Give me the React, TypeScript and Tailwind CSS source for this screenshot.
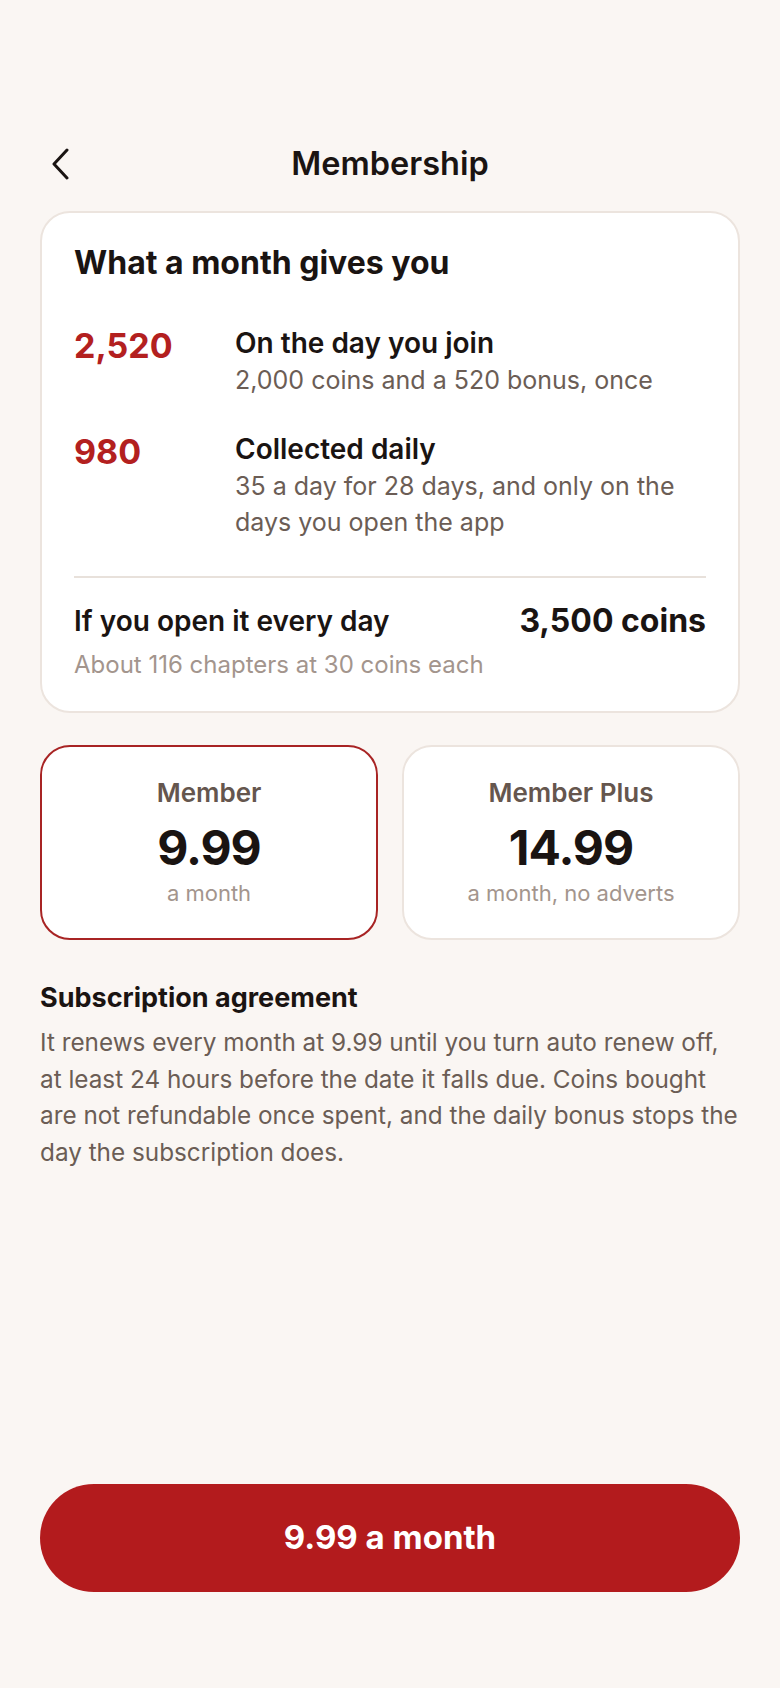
import React from "react"

const font = { fontFamily: "Inter, 'Noto Sans', Arial, sans-serif" }

// Rows of what the membership gives
const gains = [
  { amount: "2,520", title: "On the day you join", note: "2,000 coins and a 520 bonus, once" },
  { amount: "980", title: "Collected daily", note: "35 a day for 28 days, and only on the days you open the app" },
]

const plans = [
  { name: "Member", price: "9.99", note: "a month", selected: true },
  { name: "Member Plus", price: "14.99", note: "a month, no adverts", selected: false },
]

function BackIcon() {
  return (
    <svg width="20" height="32" viewBox="0 0 20 32" fill="none">
      <path d="M16 2 L3 16 L16 30" stroke="#1a1412" strokeWidth="3" strokeLinecap="round" strokeLinejoin="round" />
    </svg>
  )
}

function PlanCard({ name, price, note, selected }: { name: string; price: string; note: string; selected: boolean }) {
  return (
    <div
      className={`h-[195px] rounded-[30px] bg-white border-2 flex flex-col items-center pt-[29px] ${
        selected ? "border-[#a82424]" : "border-[#ece4de]"
      }`}
    >
      <div className="text-[26px] leading-[34px] font-semibold text-[#65564e]">{name}</div>
      <div className="mt-[10px] text-[48px] leading-[56px] font-bold text-[#1a1412] tracking-[-1px]">{price}</div>
      <div className="mt-[2px] text-[22px] leading-[30px] text-[#a3958d]">{note}</div>
    </div>
  )
}

export default function App() {
  return (
    <div style={font} className="min-h-[1688px] bg-[#faf6f3] px-[40px] flex flex-col">
      {/* Header */}
      <div className="mt-[132px] h-[64px] grid grid-cols-[60px_1fr_60px] items-center">
        <button className="pl-[11px] flex items-center">
          <BackIcon />
        </button>
        <h1 className="text-center text-[32.5px] font-semibold text-[#1a1412]">Membership</h1>
        <div />
      </div>

      {/* What a month gives you */}
      <div className="mt-[15px] rounded-[30px] bg-white border-2 border-[#ece4de] px-[32px] pt-[32px] pb-[28px]">
        <h2 className="text-[32px] leading-[36px] font-bold text-[#1a1412]">What a month gives you</h2>

        <div className="mt-[44px] flex flex-col gap-[33px]">
          {gains.map((g) => (
            <div key={g.amount} className="grid grid-cols-[161px_1fr]">
              <div className="text-[34px] leading-[40px] font-bold text-[#b3201f] mt-[1px]">{g.amount}</div>
              <div>
                <div className="text-[28px] leading-[37px] font-semibold text-[#1a1412]">{g.title}</div>
                <div className="text-[25px] leading-[36px] text-[#6b5d55]">{g.note}</div>
              </div>
            </div>
          ))}
        </div>

        <div className="mt-[36px] h-[2px] bg-[#e8e1db]" />

        <div className="mt-[25px] flex items-center justify-between">
          <div className="text-[28px] leading-[36px] font-semibold text-[#1a1412]">If you open it every day</div>
          <div className="text-[32px] leading-[36px] font-bold text-[#1a1412]">3,500 coins</div>
        </div>
        <div className="mt-[8px] text-[24px] leading-[36px] text-[#a3958d]">About 116 chapters at 30 coins each</div>
      </div>

      {/* Plans */}
      <div className="mt-[32px] grid grid-cols-2 gap-[24px]">
        {plans.map((p) => (
          <PlanCard key={p.name} {...p} />
        ))}
      </div>

      {/* Agreement */}
      <h3 className="mt-[40px] text-[27px] leading-[36px] font-bold text-[#1a1412]">Subscription agreement</h3>
      <p className="mt-[8px] text-[24.3px] leading-[36.6px] text-[#6b5d55]">
        It renews every month at 9.99 until you turn auto renew off, at least 24 hours before the date it falls due.
        Coins bought are not refundable once spent, and the daily bonus stops the day the subscription does.
      </p>

      <div className="mt-auto pb-[96px]">
        <button className="w-full h-[108px] rounded-full bg-[#b31b1d] text-white text-[33px] font-bold">
          9.99 a month
        </button>
      </div>
    </div>
  )
}
